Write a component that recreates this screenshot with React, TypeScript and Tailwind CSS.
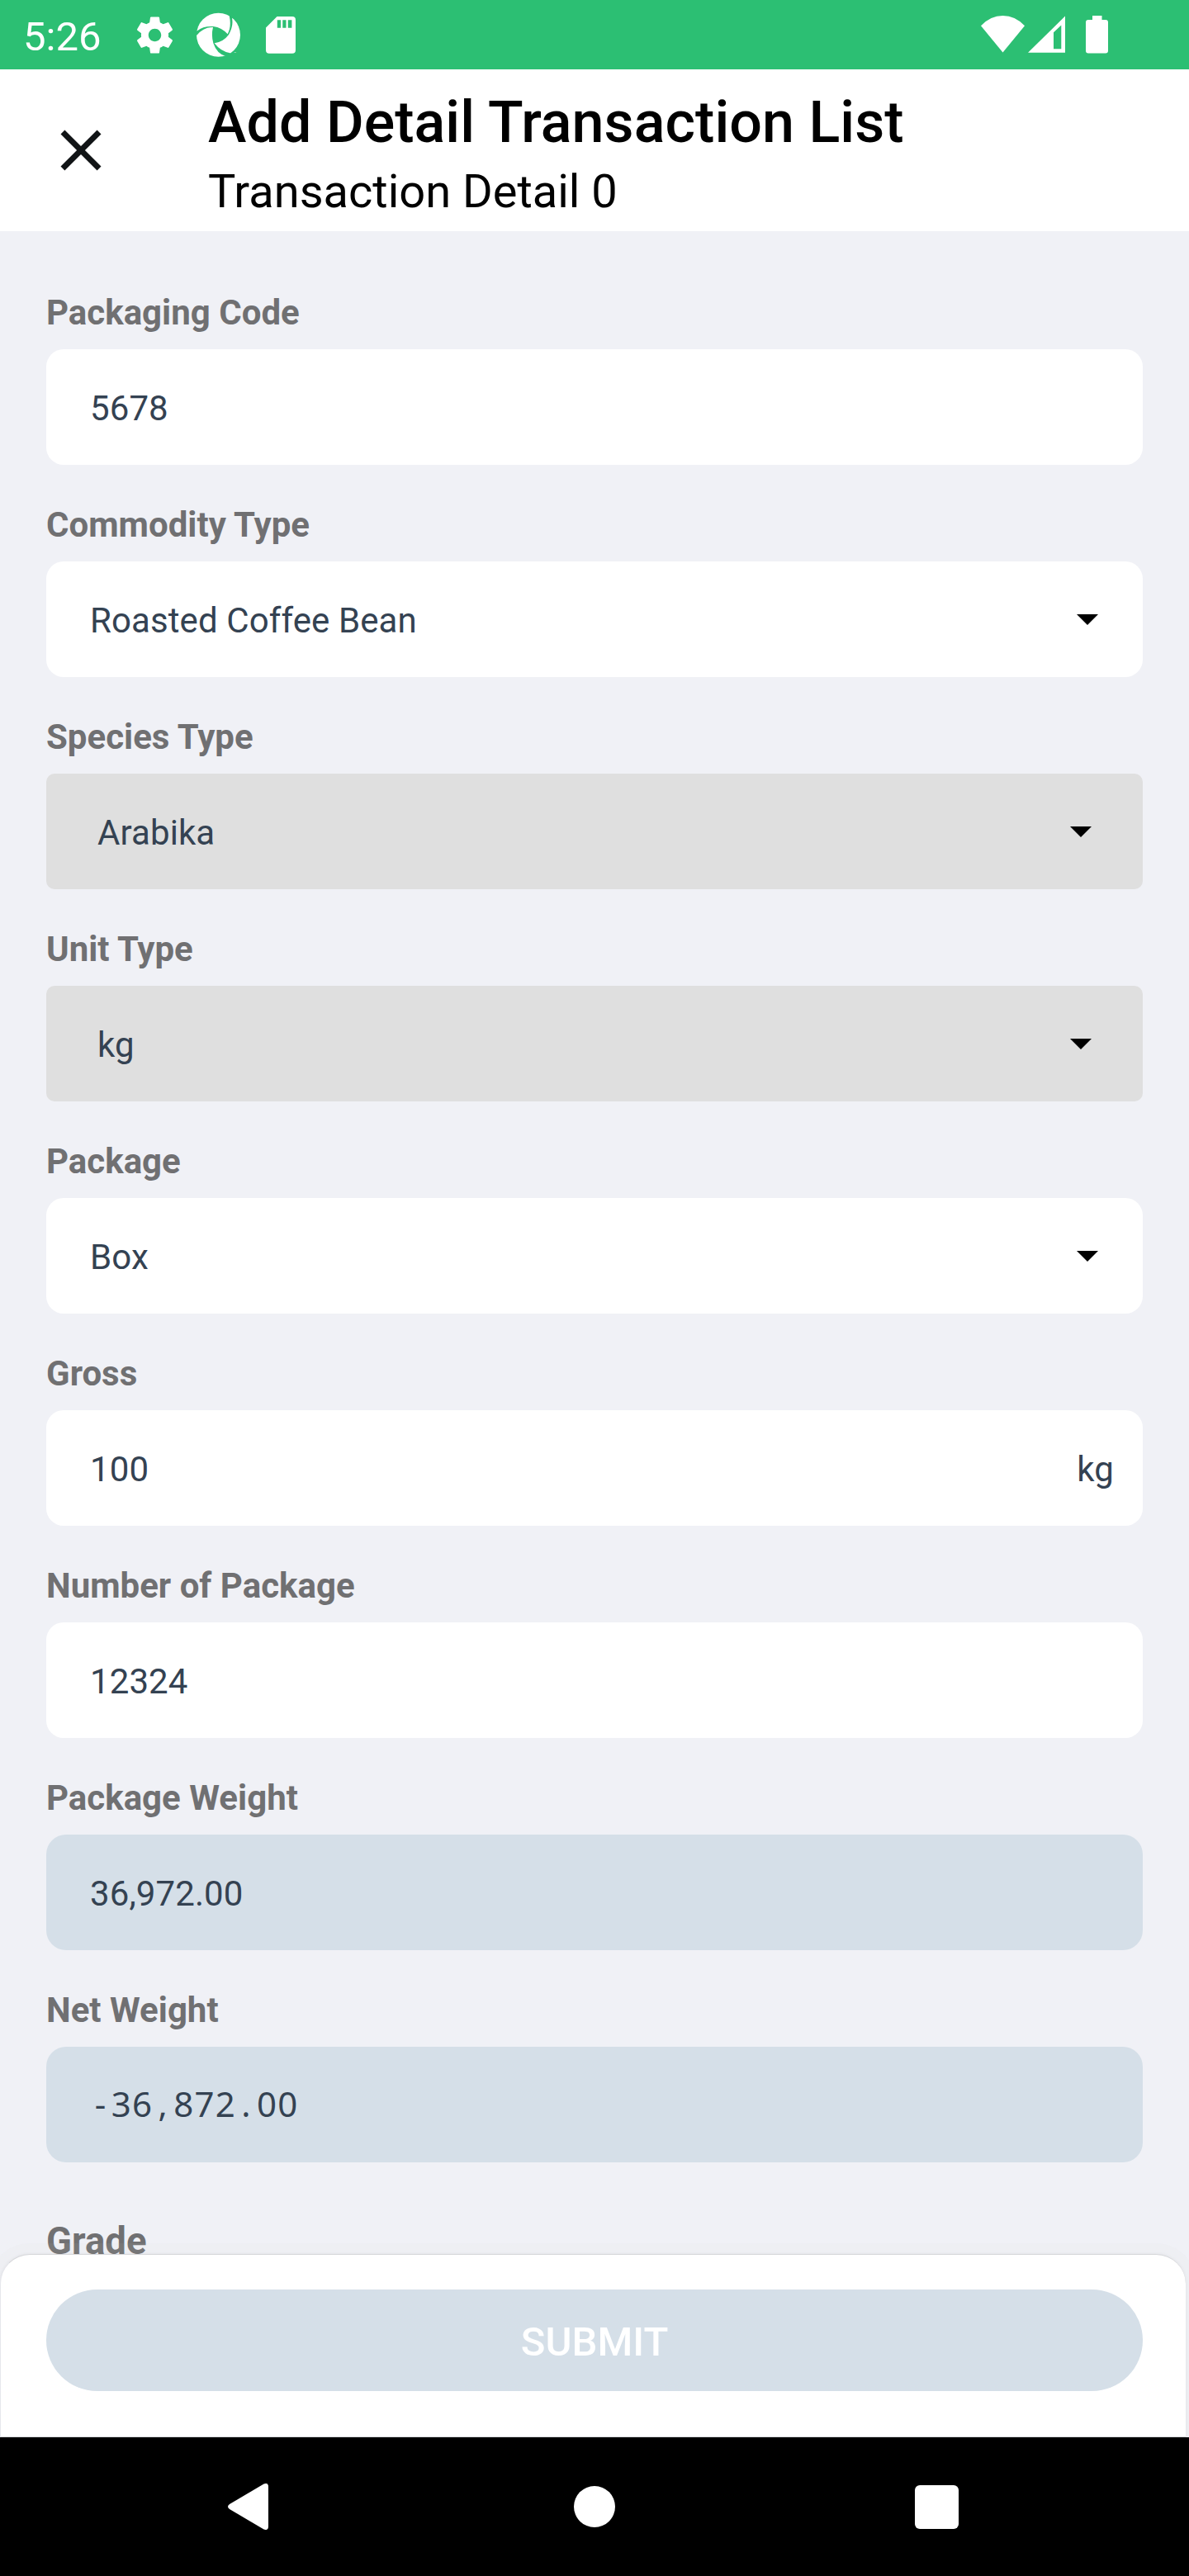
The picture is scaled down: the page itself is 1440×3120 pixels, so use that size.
import React from "react";

type FieldProps = {
  label: string;
  value: React.ReactNode;
  kind?: "input" | "select" | "locked" | "readonly";
  suffix?: string;
};

const boxStyles = {
  input: "rounded-[21px] bg-white pl-[53px] pr-[35px]",
  select: "rounded-[21px] bg-white pl-[53px] pr-[54px]",
  locked: "rounded-[10px] bg-[#dfdfdf] pl-[62px] pr-[62px]",
  readonly: "rounded-[24px] bg-[#d5dfe8] pl-[53px] pr-[35px]",
};

function Field({ label, value, kind = "input", suffix }: FieldProps) {
  const hasCaret = kind === "select" || kind === "locked";
  return (
    <div className="mb-[45px]">
      <div className="mb-[17px] text-[42px] font-bold leading-[55px] text-[#707072]">{label}</div>
      <div
        className={`flex h-[140px] items-center justify-between text-[42px] leading-[49px] tracking-[0.1px] text-[#344252] ${boxStyles[kind]}`}
      >
        <div className="pt-[3px]">{value}</div>
        {suffix && <div className="pt-[3px]">{suffix}</div>}
        {hasCaret && (
          <svg className="mt-[1px] h-[13px] w-[26px]" viewBox="0 0 26 13">
            <path d="M0 0h26L13 13z" fill="#000" />
          </svg>
        )}
      </div>
    </div>
  );
}

function StatusBar() {
  return (
    <div className="flex h-[84px] shrink-0 items-start bg-[#2cbf73] text-white">
      <div className="ml-[28px] mt-[16px] w-[125px] text-[49px] leading-[57px]">5:26</div>
      <svg className="ml-[8px] mt-[16px] h-[53px] w-[53px]" viewBox="0 0 24 24" fill="currentColor">
        <path d="M19.43 12.98c.04-.32.07-.64.07-.98s-.03-.66-.07-.98l2.11-1.65c.19-.15.24-.42.12-.64l-2-3.46c-.12-.22-.39-.3-.61-.22l-2.49 1c-.52-.4-1.08-.73-1.69-.98l-.38-2.65C14.46 2.18 14.25 2 14 2h-4c-.25 0-.46.18-.49.42l-.38 2.65c-.61.25-1.17.59-1.69.98l-2.49-1c-.23-.09-.49 0-.61.22l-2 3.46c-.13.22-.07.49.12.64l2.11 1.65c-.04.32-.07.65-.07.98s.03.66.07.98l-2.11 1.65c-.19.15-.24.42-.12.64l2 3.46c.12.22.39.3.61.22l2.49-1c.52.4 1.08.73 1.69.98l.38 2.65c.03.24.24.42.49.42h4c.25 0 .46-.18.49-.42l.38-2.65c.61-.25 1.17-.59 1.69-.98l2.49 1c.23.09.49 0 .61-.22l2-3.46c.12-.22.07-.49-.12-.64l-2.11-1.65zM12 15.5c-1.93 0-3.5-1.57-3.5-3.5s1.57-3.5 3.5-3.5 3.5 1.57 3.5 3.5-1.57 3.5-3.5 3.5z" />
      </svg>
      <svg className="ml-[22px] mt-[14px] h-[58px] w-[58px]" viewBox="708 42 174 174">
        <circle cx="793.5" cy="127" r="79.5" fill="#fff" />
        <path
          fill="#2cbf73"
          d="M706 120 L712 113 L717 112 Q738 94 775 96 Q806 100 827 124 Q842 96 833 56 L838 42 L852 55 L843 66 Q849 94 831 126 Q812 152 779 157 Q802 187 836 193 L840 206 L820 204 Q788 196 775 157 Q767 128 774 99 Q740 98 715 128 Z"
        />
        <text x="850" y="199" fontSize="13" fill="#fff" fontFamily="Roboto, sans-serif">™</text>
      </svg>
      <svg className="ml-[28px] mt-[20px] h-[45px] w-[36px]" viewBox="0 0 36 45">
        <path
          fill="#fff"
          fillRule="evenodd"
          d="M13.5 0H32a4 4 0 0 1 4 4v36.700a4 4 0 0 1-4 4H4a4 4 0 0 1-4-4V13.500zM13.800 4.300v9.400h4.200V4.300zM20.300 4.300v9.400h4.200V4.300zM26.800 4.300v9.400h4.600V4.300z"
        />
      </svg>
      <svg className="ml-auto mt-[19px] h-[45px] w-[53px]" viewBox="0 0 53 45">
        <path d="M0 12.200Q11.500 0 26.500 0T53 12.200L26.500 44.500z" fill="#fff" />
      </svg>
      <svg className="ml-[4px] mt-[19px] h-[45px] w-[45px]" viewBox="0 0 45 45">
        <path d="M0 44.700L45 0.500V44.700zM31 20.300V40.300H40.300V11.500z" fill="#fff" fillRule="evenodd" />
      </svg>
      <svg className="ml-[25px] mr-[98px] mt-[19px] h-[46px] w-[27px]" viewBox="0 0 27 46">
        <path d="M8 0h11.500v5H24a3 3 0 0 1 3 3v34.500a3 3 0 0 1-3 3H3a3 3 0 0 1-3-3V8a3 3 0 0 1 3-3h5z" fill="#fff" />
      </svg>
    </div>
  );
}

function Header() {
  return (
    <div className="flex h-[196px] shrink-0 bg-white text-black">
      <svg className="ml-[56px] mt-[56px] h-[84px] w-[84px]" viewBox="0 0 24 24" fill="#111416">
        <path d="M19 6.410L17.590 5 12 10.590 6.410 5 5 6.410 10.590 12 5 17.590 6.410 19 12 13.410 17.590 19 19 17.590 13.410 12z" />
      </svg>
      <div className="ml-[112px] mt-[23px]">
        <h1 className="text-[70px] font-medium leading-[82px] tracking-[0.05px]">Add Detail Transaction List</h1>
        <p className="mt-[10px] text-[56px] leading-[66px]">Transaction Detail 0</p>
      </div>
    </div>
  );
}

// Fixed-pitch figures: every glyph takes a cell 0.6em wide.
function FixedPitch({ text }: { text: string }) {
  return (
    <div className="-mt-[6px] flex font-['Noto_Sans'] leading-[49px] tracking-normal">
      {text.split("").map((c, i) => (
        <span key={i} className="w-[25.2px] text-center">
          {c}
        </span>
      ))}
    </div>
  );
}

export default function App() {
  return (
    <div className="flex h-[3120px] w-[1440px] flex-col overflow-hidden bg-[#f0f1f6] font-['Roboto',sans-serif]">
      <StatusBar />
      <Header />
      <main className="h-[2450px] shrink-0 overflow-hidden px-[56px] pt-[71px]">
        <Field label="Packaging Code" value="5678" />
        <Field label="Commodity Type" value="Roasted Coffee Bean" kind="select" />
        <Field label="Species Type" value="Arabika" kind="locked" />
        <Field label="Unit Type" value="kg" kind="locked" />
        <Field label="Package" value="Box" kind="select" />
        <Field label="Gross" value="100" suffix="kg" />
        <Field label="Number of Package" value="12324" />
        <Field label="Package Weight" value="36,972.00" kind="readonly" />
        <Field label="Net Weight" value={<FixedPitch text="-36,872.00" />} kind="readonly" />
        <div className="mt-[69px] text-[45.5px] font-bold leading-[53px] text-[#707072]">Grade</div>
      </main>
      <div className="relative mr-[4px] h-[222px] shrink-0 rounded-t-[36px] border-y border-l border-b-[#d6d7da] border-l-[#e6e7ec] border-t-[#d6d7da] bg-white pl-[55px] pr-[52px] pt-[42px] shadow-[0_0_4px_rgba(0,0,0,0.06),0_0_0_13px_rgba(212,212,216,0.07)]">
        <button className="flex h-[123px] w-full items-center justify-center rounded-full bg-[#d5dfe8] pt-[4px] text-[49px] font-medium leading-[57px] text-white">
          SUBMIT
        </button>
      </div>
      <nav className="relative flex h-[168px] shrink-0 items-center bg-black">
        <svg className="ml-[276px] h-[56px] w-[49px]" viewBox="0 0 49 56">
          <path
            d="M43.500 0.500Q49 -1.500 49 4V52Q49 57.500 43.500 55.500L2 31Q-2 28 2 25z"
            fill="#fff"
          />
        </svg>
        <div className="ml-[370px] h-[50px] w-[50px] rounded-full bg-white" />
        <div className="ml-[363px] h-[53px] w-[53px] rounded-[6px] bg-white" />
      </nav>
    </div>
  );
}
